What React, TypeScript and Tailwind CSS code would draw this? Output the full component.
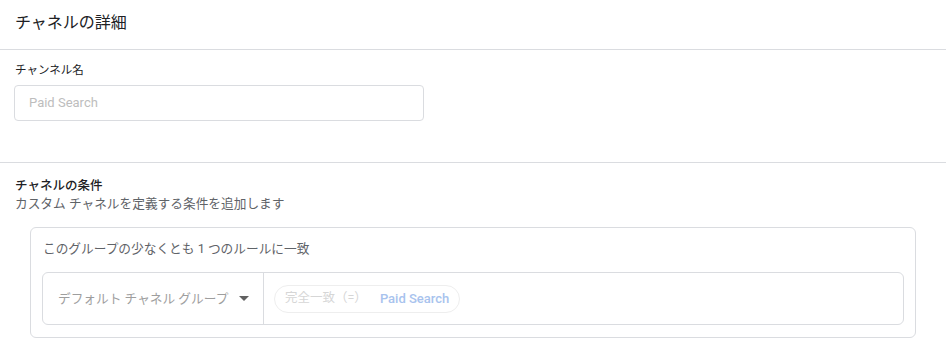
import React from "react";

const font = { fontFamily: '"Roboto", "Noto Sans CJK JP", sans-serif' };

export default function App() {
  return (
    <div className="w-[946px] h-[355px] bg-white text-[#202124] overflow-hidden" style={font}>
      <header className="h-[50px] border-b border-[#dadce0] px-[15px] flex items-center">
        <h1 className="text-[16px] leading-6 mt-[-3px]">チャネルの詳細</h1>
      </header>

      <section className="h-[113px] border-b border-[#dadce0] px-[14px] pt-[12px]">
        <label className="block text-[11.5px] leading-4 ml-[1px]">チャンネル名</label>
        <div className="mt-[7px] w-[410px] h-[36px] border border-[#dadce0] rounded-[4px] flex items-center px-[14px]">
          <span className="text-[13px] text-[#bdbdbd]">Paid Search</span>
        </div>
      </section>

      <section className="px-[15px] pt-[14px]">
        <h2 className="text-[12.5px] leading-[18px] font-medium">チャネルの条件</h2>
        <p className="text-[12.7px] leading-[18px] text-[#5f6368]">カスタム チャネルを定義する条件を追加します</p>

        <div className="mt-[14px] ml-[15px] w-[886px] h-[111px] border border-[#dadce0] rounded-[6px] px-[11px] pt-[12px]">
          <p className="text-[12.7px] leading-[18px] text-[#5f6368] ml-[1px]">このグループの少なくとも 1 つのルールに一致</p>
          <div className="mt-[14px] h-[53px] border border-[#dadce0] rounded-[6px] flex">
            <div className="w-[221px] border-r border-[#dadce0] flex items-center pl-[15px] pr-[14px] justify-between">
              <span className="text-[12.7px] text-[#9e9e9e]">デフォルト チャネル グループ</span>
              <svg width="10" height="5" viewBox="0 0 10 5">
                <path d="M0 0 L10 0 L5 5 Z" fill="#616161" />
              </svg>
            </div>
            <div className="flex items-center pl-[10px]">
              <div className="h-[28px] rounded-full border border-[#eeeeee] flex items-center pl-[10px] pr-[10px] gap-[13px]">
                <span className="text-[12.5px] text-[#d6d6d6]">完全一致（=）</span>
                <span className="text-[13px] font-medium text-[#a8c3ee]">Paid Search</span>
              </div>
            </div>
          </div>
        </div>
      </section>
    </div>
  );
}
